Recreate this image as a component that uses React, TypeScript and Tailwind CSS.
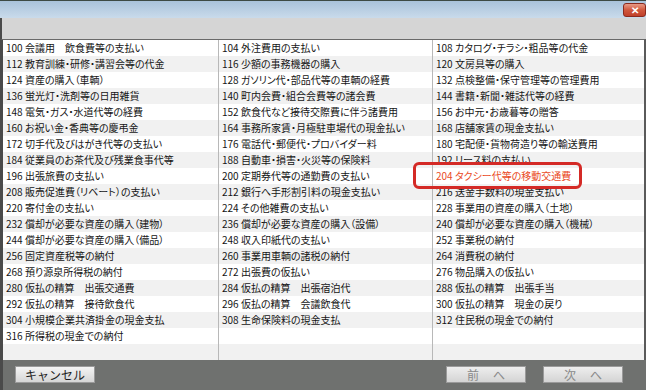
import React from 'react';

const col1 = [
  '100 会議用　飲食費等の支払い',
  '112 教育訓練・研修・講習会等の代金',
  '124 資産の購入（車輌）',
  '136 蛍光灯・洗剤等の日用雑貨',
  '148 電気・ガス・水道代等の経費',
  '160 お祝い金・香典等の慶弔金',
  '172 切手代及びはがき代等の支払い',
  '184 従業員のお茶代及び残業食事代等',
  '196 出張旅費の支払い',
  '208 販売促進費（リベート）の支払い',
  '220 寄付金の支払い',
  '232 償却が必要な資産の購入（建物）',
  '244 償却が必要な資産の購入（備品）',
  '256 固定資産税等の納付',
  '268 預り源泉所得税の納付',
  '280 仮払の精算　出張交通費',
  '292 仮払の精算　接待飲食代',
  '304 小規模企業共済掛金の現金支払',
  '316 所得税の現金での納付',
];

const col2 = [
  '104 外注費用の支払い',
  '116 少額の事務機器の購入',
  '128 ガソリン代・部品代等の車輌の経費',
  '140 町内会費・組合会費等の諸会費',
  '152 飲食代など接待交際費に伴う諸費用',
  '164 事務所家賃・月極駐車場代の現金払い',
  '176 電話代・郵便代・プロバイダー料',
  '188 自動車・損害・火災等の保険料',
  '200 定期券代等の通勤費の支払い',
  '212 銀行へ手形割引料の現金支払い',
  '224 その他雑費の支払い',
  '236 償却が必要な資産の購入（設備）',
  '248 収入印紙代の支払い',
  '260 事業用車輌の諸税の納付',
  '272 出張費の仮払い',
  '284 仮払の精算　出張宿泊代',
  '296 仮払の精算　会議飲食代',
  '308 生命保険料の現金支払',
];

const col3 = [
  '108 カタログ・チラシ・粗品等の代金',
  '120 文房具等の購入',
  '132 点検整備・保守管理等の管理費用',
  '144 書籍・新聞・雑誌代等の経費',
  '156 お中元・お歳暮等の贈答',
  '168 店舗家賃の現金支払い',
  '180 宅配便・貨物荷造り等の輸送費用',
  '192 リース料の支払い',
  '204 タクシー代等の移動交通費',
  '216 送金手数料の現金支払い',
  '228 事業用の資産の購入（土地）',
  '240 償却が必要な資産の購入（機械）',
  '252 事業税の納付',
  '264 消費税の納付',
  '276 物品購入の仮払い',
  '288 仮払の精算　出張手当',
  '300 仮払の精算　現金の戻り',
  '312 住民税の現金での納付',
];

const ROWS = 20;

const Cell = ({ text, first }: { text?: string; first?: boolean }) => {
  const selected = text?.startsWith('204');
  return (
    <div
      className={`h-[16px] flex items-center pl-[3px] whitespace-nowrap overflow-hidden ${
        first ? '' : 'border-l border-[#b8b8b8]'
      } ${selected ? 'text-[#ea4a1e]' : 'text-[#151515]'}`}
    >
      {text ?? ''}
    </div>
  );
};

export default function App() {
  return (
    <div className="w-[646px] h-[390px] flex flex-col bg-[#6f716f] overflow-hidden relative font-['Noto_Sans_CJK_JP',sans-serif]">
      {/* title bar */}
      <div className="h-[18px] shrink-0 border-t border-[#3d4a44] bg-gradient-to-b from-[#a9c2da] to-[#c9dbeb] flex justify-end items-start pt-[2px]">
        <div className="w-[23px] h-[14px] rounded-[3px] border border-[#8a2a1e] bg-gradient-to-b from-[#e79a86] via-[#d0573d] to-[#c0402a] flex items-center justify-center text-white text-[10px] font-bold leading-none">
          ✕
        </div>
      </div>

      {/* gray band */}
      <div className="h-[21px] shrink-0 bg-[#d5d5d5] border-l-[2px] border-[#4a4a4a]" />

      {/* table */}
      <div className="h-[321px] shrink-0 flex border-l-[3px] border-[#4a4a4a] border-r-[2px] border-r-[#5a5a5a] border-t border-t-[#6a6a6a] bg-white text-[10px] leading-none [font-feature-settings:'palt']">
        <div className="flex flex-col w-full">
          {Array.from({ length: ROWS }).map((_, i) => (
            <div
              key={i}
              className={`grid grid-cols-[215px_214px_1fr] ${i % 2 === 1 ? 'bg-[#f1f1f1]' : 'bg-white'}`}
            >
              <Cell text={col1[i]} first />
              <Cell text={col2[i]} />
              <Cell text={col3[i]} />
            </div>
          ))}
        </div>
      </div>

      {/* button bar */}
      <div className="flex-1 flex items-start pt-[6px] border-l-[3px] border-[#4a4a4a] text-[12px]">
        <button className="ml-[12px] w-[80px] h-[17px] flex items-center justify-center bg-gradient-to-b from-[#f4f4f4] to-[#d6d6d6] border border-[#9a9a9a] text-[#1e1e1e] leading-none">
          キャンセル
        </button>
        <button className="ml-auto w-[80px] h-[17px] flex items-center justify-center gap-[14px] bg-gradient-to-b from-[#eeeeee] to-[#d4d4d4] border border-[#9a9a9a] text-[#8a8a8a] leading-none">
          <span>前</span>
          <span>へ</span>
        </button>
        <button className="ml-[17px] mr-[23px] w-[80px] h-[17px] flex items-center justify-center gap-[14px] bg-gradient-to-b from-[#eeeeee] to-[#d4d4d4] border border-[#9a9a9a] text-[#8a8a8a] leading-none">
          <span>次</span>
          <span>へ</span>
        </button>
      </div>

      {/* highlight */}
      <div className="absolute left-[413px] top-[162px] w-[169px] h-[27px] border-[3px] border-[#d42a26] rounded-[6px] pointer-events-none" />
    </div>
  );
}
